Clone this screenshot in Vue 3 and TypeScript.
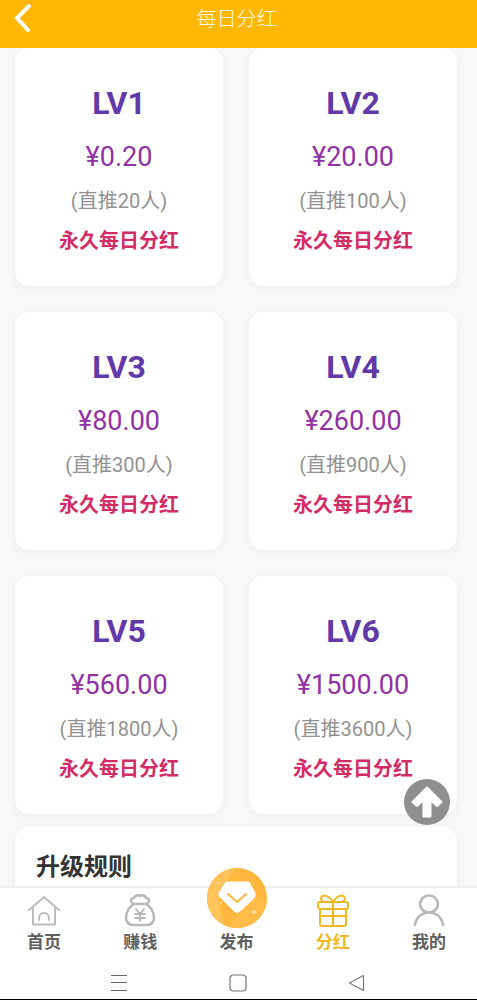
<script setup lang="ts">
interface Level {
  name: string
  price: string
  invites: number
}

const levels: Level[] = [
  { name: 'LV1', price: '0.20', invites: 20 },
  { name: 'LV2', price: '20.00', invites: 100 },
  { name: 'LV3', price: '80.00', invites: 300 },
  { name: 'LV4', price: '260.00', invites: 900 },
  { name: 'LV5', price: '560.00', invites: 1800 },
  { name: 'LV6', price: '1500.00', invites: 3600 },
]
</script>

<template>
  <div class="page">
    <header class="topbar">
      <button class="back" type="button" aria-label="返回">
        <svg width="20" height="32" viewBox="0 0 20 32" fill="none" stroke="#fff" stroke-width="4" stroke-linecap="round" stroke-linejoin="miter">
          <path d="M16 5 L4 17 L15 29" />
        </svg>
      </button>
      <h1 class="title">每日分红</h1>
    </header>

    <main class="content">
      <section class="grid">
        <article v-for="level in levels" :key="level.name" class="card">
          <h2 class="level">{{ level.name }}</h2>
          <p class="price">¥{{ level.price }}</p>
          <p class="invites">(直推{{ level.invites }}人)</p>
          <p class="tag">永久每日分红</p>
        </article>
      </section>
      <section class="rules">
        <h2 class="rules-title">升级规则</h2>
      </section>
      <button class="to-top" type="button" aria-label="回到顶部">
        <svg width="46" height="46" viewBox="0 0 46 46">
          <circle cx="23" cy="23" r="23" fill="#8f8f8f" />
          <path d="M23 8.500 L37.500 23 L33 27 L26.500 21 V37.500 H19.500 V21 L13 27 L8.500 23 Z" fill="#fff" stroke="#fff" stroke-width="2" stroke-linejoin="round" />
        </svg>
      </button>
    </main>

    <nav class="tabs">
      <a class="tab" href="#home">
        <svg class="icon" width="34" height="34" viewBox="0 0 34 34" fill="none" stroke="#bcbcbc" stroke-width="2" stroke-linecap="round" stroke-linejoin="round">
          <path d="M2 16 L17 3 L32 16" />
          <path d="M6 13 V30.500 H28 V13" />
          <path d="M12 26 V24 A5 5 0 0 1 22 24 V26" />
        </svg>
        <span>首页</span>
      </a>
      <a class="tab" href="#earn">
        <svg class="icon" width="34" height="34" viewBox="0 0 34 34" fill="none" stroke="#b8b8b8" stroke-width="2.500" stroke-linecap="round" stroke-linejoin="round">
          <path d="M11 10 C7 8 7 4 11 4 C12 1 16 1 17 2 C19 0 23 2 23 4 C27 4 27 8 23 10 Z" />
          <path d="M11 10 C6 13 3 18 3 24 C3 28 6 31 10 31 H24 C28 31 31 28 31 24 C31 18 28 13 23 10" />
          <path d="M13 15 L17 20 L21 15 M17 20 V27 M12 20 H22 M12 24 H22" stroke-width="2" />
        </svg>
        <span>赚钱</span>
      </a>
      <a class="tab" href="#publish">
        <svg class="publish" width="60" height="60" viewBox="0 0 60 60">
          <defs>
            <clipPath id="disc"><circle cx="30" cy="30" r="30" /></clipPath>
          </defs>
          <g clip-path="url(#disc)">
            <rect width="60" height="60" fill="#ffb83d" />
            <path d="M0 0 H29 L10 26 L18 60 H0 Z" fill="#ffc35b" />
            <path d="M18 60 L30 45 L48 27 L60 33 V60 Z" fill="#ffbc47" />
          </g>
          <path d="M19 14 H42 L48 25 Q49 28 46 31 L33 43 Q30 46 27 43 L13 29 Q11 27 12 25 Z" fill="#fff" stroke="#fff" stroke-width="1" stroke-linejoin="round" />
          <path d="M21 26 L30 34 L39 26" fill="none" stroke="#ffb83d" stroke-width="2" stroke-linecap="round" stroke-linejoin="round" />
          <circle cx="12" cy="15" r="1" fill="#ffe7bd" />
          <circle cx="47" cy="44" r="2" fill="#ffe0a6" />
          <circle cx="14" cy="35" r="1" fill="#ffdb97" />
        </svg>
        <span>发布</span>
      </a>
      <a class="tab active" href="#dividend" aria-current="page">
        <svg class="icon" width="34" height="34" viewBox="0 0 34 34" fill="none" stroke="#efb91f" stroke-width="2" stroke-linecap="round" stroke-linejoin="round">
          <rect x="2" y="8" width="30" height="7" rx="2" />
          <path d="M4 15 V30 Q4 32 6 32 H28 Q30 32 30 30 V15 M17 8 V32 M4 22 H30" />
          <path d="M17 8 C13 1 6 0 5 4 Q5 7 8 8 M17 8 C21 1 28 0 29 4 Q29 7 26 8" />
        </svg>
        <span>分红</span>
      </a>
      <a class="tab" href="#me">
        <svg class="icon" width="34" height="34" viewBox="0 0 34 34" fill="none" stroke="#b8b8b8" stroke-width="2.500" stroke-linecap="round">
          <ellipse cx="17" cy="10" rx="9" ry="8.500" />
          <path d="M3 31 C4 23 10 18.500 17 18.500 C24 18.500 30 23 31 31" />
        </svg>
        <span>我的</span>
      </a>
    </nav>

    <footer class="system">
      <button type="button" aria-label="最近任务">
        <svg width="18" height="18" viewBox="0 0 18 18" fill="none" stroke="#666" stroke-width="1">
          <path d="M1 1.500 H17 M1 8.500 H17 M1 16.500 H17" />
        </svg>
      </button>
      <button type="button" aria-label="主屏幕">
        <svg width="18" height="18" viewBox="0 0 18 18" fill="none" stroke="#777" stroke-width="1.200">
          <rect x="1" y="1" width="16" height="16" rx="3.500" />
        </svg>
      </button>
      <button type="button" aria-label="返回上一级">
        <svg width="18" height="18" viewBox="0 0 18 18" fill="none" stroke="#777" stroke-width="1.200" stroke-linejoin="round">
          <path d="M1.500 9 L15.500 1.500 V16.500 Z" />
        </svg>
      </button>
    </footer>
  </div>
</template>

<style>
body {
  margin: 0;
}
</style>

<style scoped>
.page {
  display: flex;
  flex-direction: column;
  height: 100vh;
  overflow: hidden;
  background: #f8f8f8;
  font-family: Roboto, "Noto Sans CJK SC", sans-serif;
}

h1,
h2,
p {
  margin: 0;
}

button {
  display: block;
  padding: 0;
  border: 0;
  background: none;
}

svg {
  display: block;
}

.topbar {
  display: grid;
  grid-template-columns: 60px 1fr 64px;
  align-items: start;
  flex: none;
  height: 48px;
  background: #ffb703;
}

.back {
  padding: 1px 0 0 13px;
}

.title {
  color: #fffbe8;
  font-size: 20px;
  font-weight: 300;
  line-height: 38px;
  text-align: center;
}

.content {
  position: relative;
  flex: 1;
  min-height: 0;
  overflow: hidden;
  padding: 0 20px 0 15px;
}

.grid {
  display: grid;
  grid-template-columns: 1fr 1fr;
  gap: 26px;
}

.card {
  display: flex;
  flex-direction: column;
  align-items: center;
  padding: 35px 0 33px;
  border-radius: 14px;
  background: #fff;
  box-shadow: 0 2px 8px rgba(0, 0, 0, 0.05);
}

.level {
  color: #6139a8;
  font-size: 32px;
  font-weight: 700;
  line-height: 40px;
}

.price {
  margin-top: 18px;
  color: #9132a6;
  font-size: 27px;
  line-height: 32px;
}

.invites {
  margin-top: 16px;
  color: #929292;
  font-size: 20px;
  line-height: 24px;
}

.tag {
  margin-top: 16px;
  color: #d32d68;
  font-size: 20px;
  font-weight: 700;
  line-height: 24px;
}

.rules {
  margin-top: 13px;
  padding: 24px 21px 80px;
  border-radius: 14px;
  background: #fff;
  box-shadow: 0 2px 8px rgba(0, 0, 0, 0.05);
}

.rules-title {
  color: #333;
  font-size: 24px;
  font-weight: 700;
  line-height: 32px;
}

.to-top {
  position: absolute;
  right: 27px;
  bottom: 61px;
}

.tabs {
  position: relative;
  display: flex;
  flex: none;
  align-items: flex-end;
  justify-content: space-between;
  box-sizing: border-box;
  height: 80px;
  padding: 0 18px 14px 14px;
  border-top: 2px solid #eff0f3;
  background: #fff;
}

.tab {
  display: flex;
  flex-direction: column;
  align-items: center;
  width: 60px;
  color: #606060;
  font-size: 17px;
  font-weight: 700;
  line-height: 20px;
  text-decoration: none;
}

.icon {
  margin-bottom: 4px;
}

.publish {
  margin-bottom: 4px;
}

.active {
  color: #efb91f;
}

.system {
  display: flex;
  flex: none;
  align-items: center;
  justify-content: space-between;
  box-sizing: border-box;
  height: 34px;
  padding: 0 111px 0 110px;
  border-bottom: 1px solid #000;
  background: #fff;
}
</style>
